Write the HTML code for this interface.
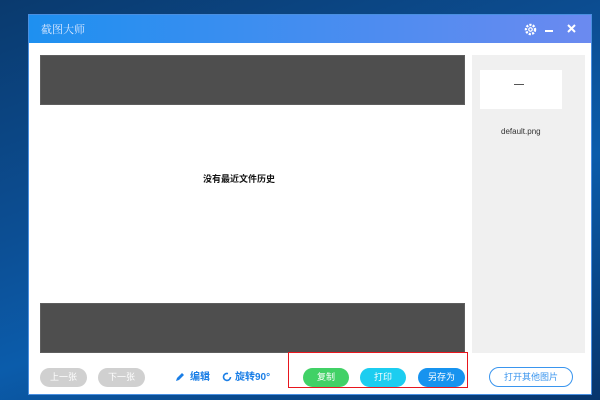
<!DOCTYPE html>
<html><head><meta charset="utf-8"><style>
*{margin:0;padding:0;box-sizing:border-box}
body{width:600px;height:400px;overflow:hidden;position:relative;font-family:"Liberation Sans","Noto Sans CJK SC",sans-serif;
background:linear-gradient(160deg,#0a3a6e 0%,#0c4f95 40%,#0b5cab 60%,#07356c 100%)}
.win{position:absolute;left:28px;top:14px;width:564px;height:381px;background:#fff;border:1px solid #4a8fe0}
.title{position:absolute;left:0;top:0;width:100%;height:28px;background:linear-gradient(90deg,#1e90f0,#6b8af0);color:#dbe9ff;font-family:"Noto Serif CJK SC",serif;font-size:11px}
.title span{position:absolute;left:12px;top:6px}
.a{position:absolute}
.gray{background:#4e4e4e;border:1px solid #5e5e5e}
.btn{position:absolute;height:19px;border-radius:9.5px;color:#fff;font-size:9px;text-align:center;line-height:19px}
</style></head><body>
<div class="win">
 <div class="title"><span>截图大师</span>
  <svg class="a" style="left:495px;top:8px" width="13" height="13" viewBox="0 0 12 12"><circle cx="6" cy="6" r="4.2" fill="none" stroke="#fff" stroke-width="2.2" stroke-dasharray="2 1.1"/><circle cx="6" cy="6" r="1.6" fill="none" stroke="#fff" stroke-width="1.2"/></svg>
  <div class="a" style="left:516px;top:15px;width:8px;height:2px;background:#fff"></div>
  <svg class="a" style="left:538px;top:9px" width="9" height="9" viewBox="0 0 9 9"><path d="M1 1L8 8M8 1L1 8" stroke="#fff" stroke-width="2"/></svg>
 </div>
 <div class="a gray" style="left:11px;top:40px;width:425px;height:50px"></div>
 <div class="a gray" style="left:11px;top:288px;width:425px;height:50px"></div>
 <div class="a" style="left:174px;top:157px;font-size:9px;font-weight:bold;color:#111">没有最近文件历史</div>
 <div class="a" style="left:443px;top:40px;width:113px;height:298px;background:#f0f0f0"></div>
 <div class="a" style="left:451px;top:55px;width:82px;height:39px;background:#fff"></div>
 <div class="a" style="left:485px;top:69px;width:10px;height:1px;background:#555"></div>
 <div class="a" style="left:472px;top:112px;font-size:8px;color:#333">default.png</div>
 <div class="btn" style="left:11px;top:353px;width:47px;background:#d0d0d0">上一张</div>
 <div class="btn" style="left:69px;top:353px;width:47px;background:#d0d0d0">下一张</div>
 <svg class="a" style="left:146px;top:357px" width="10" height="10" viewBox="0 0 10 10"><path d="M1 9L2 6L7 1L9 3L4 8Z" fill="#1a7ee6"/></svg>
 <div class="a" style="left:161px;top:353px;font-size:10px;color:#1a7ee6;font-weight:bold;line-height:19px">编辑</div>
 <svg class="a" style="left:193px;top:357px" width="10" height="10" viewBox="0 0 10 10"><path d="M8.5 5A3.5 3.5 0 1 1 6 1.6" fill="none" stroke="#1a7ee6" stroke-width="1.6"/></svg>
 <div class="a" style="left:206px;top:353px;font-size:10px;color:#1a7ee6;font-weight:bold;line-height:19px">旋转90°</div>
 <div class="a" style="left:259px;top:337px;width:180px;height:36px;border:1.5px solid #e8161e"></div>
 <div class="btn" style="left:274px;top:353px;width:46px;background:#41d166">复制</div>
 <div class="btn" style="left:331px;top:353px;width:46px;background:#1ccdf0">打印</div>
 <div class="btn" style="left:389px;top:353px;width:47px;background:#1793ef">另存为</div>
 <div class="btn" style="left:460px;top:352px;width:84px;height:20px;border:1px solid #3a95ee;color:#3a95ee;line-height:18px;border-radius:10px">打开其他图片</div>
</div>
</body></html>
